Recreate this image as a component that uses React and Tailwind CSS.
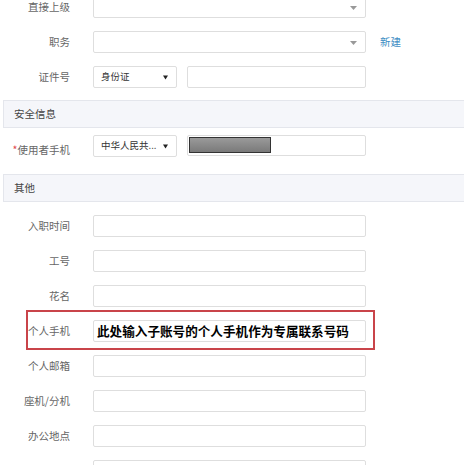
import React from "react";

function Label({ children, extra = "" }) {
  return (
    <div className={`w-[70px] shrink-0 text-right text-[10.5px] leading-none text-[#666] ${extra}`}>
      {children}
    </div>
  );
}

function Caret() {
  return (
    <svg width="7" height="4" viewBox="0 0 7 4" className="absolute right-[8px] top-[9px]">
      <path d="M0 0h7L3.5 4z" fill="#999" />
    </svg>
  );
}

function Input({ children, select = false, w = "w-[273px]" }) {
  return (
    <div className={`relative ${w} h-[22px] shrink-0 rounded-[2px] border border-[#dedede] bg-white`}>
      {select && <Caret />}
      {children}
    </div>
  );
}

function Row({ label, children, extra = "" }) {
  return (
    <div className={`flex h-[22px] items-center ${extra}`}>
      <Label>{label}</Label>
      <div className="ml-[23px] flex items-center">{children}</div>
    </div>
  );
}

function Section({ title, extra = "" }) {
  return (
    <div
      className={`ml-[3px] flex h-[28px] items-center border border-r-0 border-[#e4e6ec] bg-[#f5f6fa] pl-[10px] text-[10.5px] text-[#444] ${extra}`}
    >
      {title}
    </div>
  );
}

function MiniSelect({ text }) {
  return (
    <div className="relative flex h-[22px] w-[84px] items-center rounded-[2px] border border-[#dedede] bg-white pl-[7px] text-[9.5px] leading-none text-[#333]">
      {text}
      <svg width="5" height="5" viewBox="0 0 5 5" className="absolute right-[8px] top-[8px]">
        <path d="M0 0.5h5L2.5 4.5z" fill="#222" />
      </svg>
    </div>
  );
}

export default function App() {
  return (
    <div className="h-[465px] w-[464px] overflow-hidden bg-white font-['Noto_Sans_CJK_SC',sans-serif]">
      <div className="mt-[-4px] flex flex-col">
        <Row label="直接上级">
          <Input select />
        </Row>
        <Row label="职务" extra="mt-[13px]">
          <Input select />
          <span className="ml-[14px] text-[10.5px] text-[#3d8dc4]">新建</span>
        </Row>
        <Row label="证件号" extra="mt-[13px]">
          <MiniSelect text="身份证" />
          <div className="ml-[10px]">
            <Input w="w-[179px]" />
          </div>
        </Row>

        <Section title="安全信息" extra="mt-[12px]" />

        <div className="mt-[7px] flex h-[21px] items-center">
          <Label extra="translate-y-[5px]">
            <span className="text-[#e04848]">*</span>使用者手机
          </Label>
          <div className="ml-[23px] flex items-center">
            <MiniSelect text="中华人民共..." />
            <div className="relative ml-[10px] h-[21px] w-[179px] rounded-[2px] border border-[#dedede] bg-white">
              <div className="ml-[1px] mt-[1px] h-[16px] w-[82px] border border-[#333] bg-gradient-to-b from-[#9a9a9a] to-[#7a7a7a]" />
            </div>
          </div>
        </div>

        <Section title="其他" extra="mt-[18px]" />

        <Row label="入职时间" extra="mt-[13px]">
          <Input />
        </Row>
        <Row label="工号" extra="mt-[13px]">
          <Input />
        </Row>
        <Row label="花名" extra="mt-[13px]">
          <Input />
        </Row>
        <div className="relative mt-[13px]">
          <Row label="个人手机">
            <Input>
              <div className="flex h-full items-center pl-[3px] text-[12.6px] font-bold leading-none text-black">
                此处输入子账号的个人手机作为专属联系号码
              </div>
            </Input>
          </Row>
          <div className="pointer-events-none absolute left-[26px] top-[-10px] h-[40px] w-[349px] border-2 border-[#c9444a]" />
        </div>
        <Row label="个人邮箱" extra="mt-[13px]">
          <Input />
        </Row>
        <Row label="座机/分机" extra="mt-[13px]">
          <Input />
        </Row>
        <Row label="办公地点" extra="mt-[13px]">
          <Input />
        </Row>
        <Row label="其他" extra="mt-[13px]">
          <Input />
        </Row>
      </div>
    </div>
  );
}
